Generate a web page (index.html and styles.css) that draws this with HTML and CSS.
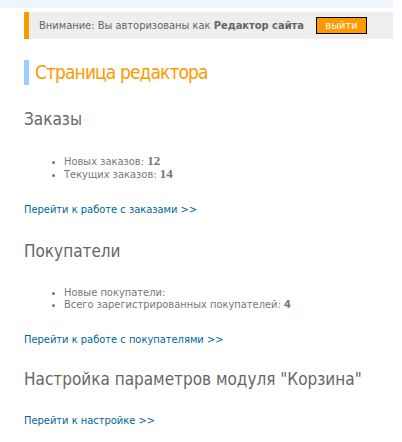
FILE: index.html
```html
<!DOCTYPE html>
<html lang="ru">
<head>
<meta charset="utf-8">
<title>Страница редактора</title>
<link rel="stylesheet" href="styles.css">
</head>
<body>
<div class="topband"></div>
<div class="page">
  <div class="notice">
    <span class="notice-text">Внимание: Вы авторизованы как <b>Редактор сайта</b></span>
    <button class="logout">выйти</button>
  </div>

  <h1 class="title">Страница редактора</h1>

  <h2 class="section">Заказы</h2>
  <ul class="stats">
    <li>Новых заказов: <b class="num-serif">12</b></li>
    <li>Текущих заказов: <b class="num-serif">14</b></li>
  </ul>
  <p class="more"><a href="#">Перейти к работе с заказами &gt;&gt;</a></p>

  <h2 class="section">Покупатели</h2>
  <ul class="stats">
    <li>Новые покупатели: </li>
    <li>Всего зарегистрированных покупателей: <b>4</b></li>
  </ul>
  <p class="more"><a href="#">Перейти к работе с покупателями &gt;&gt;</a></p>

  <h2 class="section section-last">Настройка параметров модуля "Корзина"</h2>
  <p class="more more-single"><a href="#">Перейти к настройке &gt;&gt;</a></p>
</div>
</body>
</html>
```

FILE: styles.css
```css
html, body {
  margin: 0;
  padding: 0;
  background: #ffffff;
}

body {
  font-family: "DejaVu Sans Condensed", "DejaVu Sans", sans-serif;
  font-size: 11px;
  color: #777777;
}

.topband {
  width: 393px;
  height: 8px;
  background: #eef5fc;
}

.page {
  width: 369px;
  padding-left: 24px;
}

.notice {
  margin-top: 4px;
  height: 27px;
  box-sizing: border-box;
  border-left: 5px solid #ff9900;
  background: #eeeeee;
  padding-left: 10px;
  display: flex;
  align-items: center;
  color: #666666;
}

.notice-text b {
  color: #666666;
}

.logout {
  margin-left: 12px;
  width: 51px;
  height: 17px;
  box-sizing: border-box;
  border: 1px solid #000000;
  background: #ff9900;
  color: #ffffff;
  font-family: inherit;
  font-size: 11px;
  padding: 0;
  line-height: 14px;
}

.title {
  margin: 21px 0 0 0;
  height: 25px;
  border-left: 5px solid #99ccff;
  padding-left: 6px;
  font-size: 19px;
  letter-spacing: -0.9px;
  font-weight: normal;
  line-height: 25px;
  color: #ff9900;
}

.section {
  margin: 24px 0 0 0;
  font-size: 17px;
  font-weight: normal;
  line-height: 20px;
  color: #666666;
}

.section-last {
  margin-top: 22px;
}

.stats {
  margin: 26px 0 0 0;
  padding-left: 40px;
  line-height: 12px;
  list-style: disc;
}

.stats li::marker {
  font-size: 9px;
}

.num-serif {
  font-family: "Liberation Serif", serif;
  font-size: 13px;
}

.more {
  margin: 22px 0 0 0;
  line-height: 14px;
}

.more-single {
  margin-top: 25px;
}

.more a {
  color: #006699;
  text-decoration: none;
}
```
